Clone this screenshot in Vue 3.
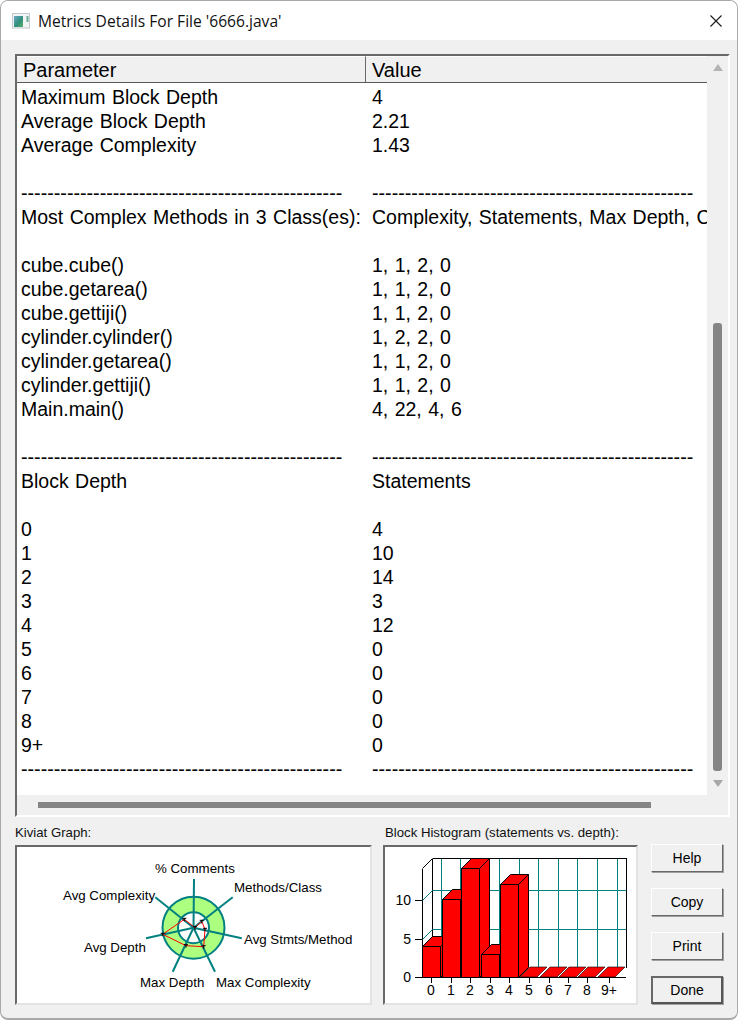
<template>
  <div class="window">
    <div class="titlebar">
      <svg class="app-icon" width="18" height="16" viewBox="0 0 18 16">
        <defs>
          <linearGradient id="iconFill" x1="0" y1="0" x2="1" y2="1">
            <stop offset="0" stop-color="#6fa8c8" />
            <stop offset="0.55" stop-color="#2f8f7c" />
            <stop offset="1" stop-color="#5fae6a" />
          </linearGradient>
        </defs>
        <rect x="0.5" y="0.5" width="17" height="14.5" fill="#f1f4f5" stroke="#c2c8cc" />
        <rect x="2" y="3" width="9" height="11" fill="url(#iconFill)" />
        <rect x="14.5" y="3" width="2" height="6" fill="#6fae96" />
      </svg>
      <span class="title">Metrics Details For File '6666.java'</span>
      <svg class="close" width="12" height="12" viewBox="0 0 12 12">
        <path d="M0.5 0.5 L11.5 11.5 M11.5 0.5 L0.5 11.5" stroke="#1a1a1a" stroke-width="1.1" fill="none" />
      </svg>
    </div>

    <div class="content">
      <div class="listbox">
        <div class="list-main">
          <div class="list-view">
            <div class="list-head">
              <div class="head-cell first">Parameter</div>
              <div class="head-cell">Value</div>
            </div>
            <div class="list-rows">
              <div v-for="(row, i) in rows" :key="i" class="row" :class="{ dashes: row[0] === dash }">
                <span class="col-a">{{ row[0] }}</span>
                <span class="col-b">{{ row[1] }}</span>
              </div>
            </div>
          </div>
          <div class="vscroll">
            <span class="arrow up"></span>
            <div class="vtrack"><div class="vthumb"></div></div>
            <span class="arrow down"></span>
          </div>
        </div>
        <div class="hscroll"><div class="hthumb"></div></div>
      </div>

      <div class="bottom">
        <div class="graph-block kiviat-block">
          <div class="graph-label">Kiviat Graph:</div>
          <div class="panel">
            <svg class="chart" viewBox="17 847 353 155" width="353" height="155">
              <circle cx="193.5" cy="927.7" r="31" fill="#adff7f" stroke="#008080" stroke-width="2" />
              <circle cx="193.5" cy="927.7" r="15.5" fill="#fff" stroke="#008080" stroke-width="2" />
              <line v-for="s in spokes" :key="s[0]" x1="193.5" y1="927.7" :x2="s[0]" :y2="s[1]" stroke="#008080" stroke-width="2" />
              <polygon :points="kiviatPoints" fill="none" stroke="#ff0000" stroke-width="1" />
              <path v-for="p in kiviat" :key="p[0]" :d="`M${p[0] - 2} ${p[1] - 1}h4M${p[0]} ${p[1] - 1}v3`" stroke="#000" stroke-width="1" fill="none" />
              <text v-for="l in kiviatLabels" :key="l.t" :x="l.x" :y="l.y" class="chart-text">{{ l.t }}</text>
            </svg>
          </div>
        </div>

        <div class="graph-block hist-block">
          <div class="graph-label">Block Histogram (statements vs. depth):</div>
          <div class="panel">
            <svg class="chart" viewBox="385 847 251 155" width="251" height="155">
              <g shape-rendering="crispEdges">
                <line v-for="x in gridX" :key="x" :x1="x" y1="858" :x2="x" y2="967" stroke="#008080" />
                <line x1="432" y1="890" x2="626" y2="890" stroke="#008080" />
                <line x1="432" y1="929" x2="626" y2="929" stroke="#008080" />
                <path d="M432.5 858.5H626.5V967.5M432.5 858.5V967.5M422.5 868.5V977.5H626" stroke="#000" fill="none" />
                <path d="M415 900.5h7M415 939.5h7M415 977.5h7" stroke="#000" fill="none" />
                <line v-for="t in ticks" :key="t.l" :x1="t.x" y1="978" :x2="t.x" y2="983" stroke="#000" />
              </g>
              <path d="M422.5 900.5L432.5 890.5M422.5 939.5L432.5 929.5" stroke="#008080" fill="none" />
              <path d="M422.5 868.5L432.5 858.5" stroke="#000" fill="none" />
              <g v-for="b in flatBars" :key="b">
                <polygon :points="`${b},977 ${b + 17},977 ${b + 27},967 ${b + 10},967`" fill="#ff0000" stroke="#000" stroke-width="0.6" />
              </g>
              <g v-for="b in bars" :key="b.x" stroke="#000" stroke-width="1" fill="#ff0000">
                <polygon :points="`${b.x + 18},${b.top} ${b.x + 28},${Math.max(b.top - 10, 858.5)} ${b.x + 28},967.5 ${b.x + 18},977.5`" />
                <polygon :points="topFace(b)" />
                <rect :x="b.x" :y="b.top" width="18" :height="977.5 - b.top" />
              </g>
              <text x="411" y="905" class="axis-text end">10</text>
              <text x="411" y="944" class="axis-text end">5</text>
              <text x="411" y="982" class="axis-text end">0</text>
              <text v-for="t in ticks" :key="t.l + 't'" :x="t.x" y="995" class="axis-text mid">{{ t.l }}</text>
            </svg>
          </div>
        </div>

        <div class="buttons">
          <button class="btn">Help</button>
          <button class="btn">Copy</button>
          <button class="btn">Print</button>
          <button class="btn default">Done</button>
        </div>
      </div>
    </div>
  </div>
</template>

<script setup>
const dash = '-'.repeat(49)

const rows = [
  ['Maximum Block Depth', '4'],
  ['Average Block Depth', '2.21'],
  ['Average Complexity', '1.43'],
  ['', ''],
  [dash, dash],
  ['Most Complex Methods in 3 Class(es):', 'Complexity, Statements, Max Depth, Calls'],
  ['', ''],
  ['cube.cube()', '1, 1, 2, 0'],
  ['cube.getarea()', '1, 1, 2, 0'],
  ['cube.gettiji()', '1, 1, 2, 0'],
  ['cylinder.cylinder()', '1, 2, 2, 0'],
  ['cylinder.getarea()', '1, 1, 2, 0'],
  ['cylinder.gettiji()', '1, 1, 2, 0'],
  ['Main.main()', '4, 22, 4, 6'],
  ['', ''],
  [dash, dash],
  ['Block Depth', 'Statements'],
  ['', ''],
  ['0', '4'],
  ['1', '10'],
  ['2', '14'],
  ['3', '3'],
  ['4', '12'],
  ['5', '0'],
  ['6', '0'],
  ['7', '0'],
  ['8', '0'],
  ['9+', '0'],
  [dash, dash]
]

const spokes = [
  [194, 879],
  [232.7, 897.3],
  [241.7, 938.3],
  [215, 971.7],
  [172.7, 971.7],
  [146, 938.3],
  [155.3, 897.3]
]

const kiviat = [
  [201.7, 921.3],
  [205, 929.3],
  [203.7, 946.7],
  [186, 945.7],
  [162.7, 934.3],
  [184.3, 919.3],
  [195, 927.7]
]
const kiviatPoints = kiviat.map(p => p.join(',')).join(' ')

const kiviatLabels = [
  { t: '% Comments', x: 155, y: 873 },
  { t: 'Methods/Class', x: 234, y: 892 },
  { t: 'Avg Complexity', x: 63, y: 900 },
  { t: 'Avg Stmts/Method', x: 244, y: 944 },
  { t: 'Avg Depth', x: 84, y: 952 },
  { t: 'Max Depth', x: 140, y: 987 },
  { t: 'Max Complexity', x: 216, y: 987 }
]

const gridX = [441.5, 460.5, 480.5, 499.5, 519.5, 538.5, 558.5, 577.5, 597.5, 617.5]

const bars = [
  { x: 422.5, top: 946.5 },
  { x: 442.5, top: 899.5 },
  { x: 461.5, top: 868.5 },
  { x: 481.5, top: 954.5 },
  { x: 500.5, top: 884.5 }
]

const flatBars = [520, 540, 559, 578, 598]

const ticks = [
  { l: '0', x: 431 },
  { l: '1', x: 451 },
  { l: '2', x: 470 },
  { l: '3', x: 490 },
  { l: '4', x: 509 },
  { l: '5', x: 529 },
  { l: '6', x: 549 },
  { l: '7', x: 568 },
  { l: '8', x: 587 },
  { l: '9+', x: 609 }
]

// top face of a bar, cut off where it would leave the back wall
function topFace(b) {
  const back = Math.max(b.top - 10, 858.5)
  const shift = b.top - back
  return `${b.x},${b.top} ${b.x + 18},${b.top} ${b.x + 18 + shift},${back} ${b.x + shift},${back}`
}
</script>

<style>
html, body { margin: 0; background: #fff; }
</style>

<style scoped>
.window {
  box-sizing: border-box;
  width: 738px;
  height: 1020px;
  background: #f0f0f0;
  border: 1px solid #a9a9a9;
  border-bottom-width: 2px;
  border-radius: 8px;
  overflow: hidden;
  font-family: "Liberation Sans", Arial, sans-serif;
  color: #000;
  display: flex;
  flex-direction: column;
}
.titlebar {
  height: 39px;
  flex: none;
  background: #fff;
  display: flex;
  align-items: center;
  padding: 0 15px 0 11px;
  gap: 8px;
}
.title {
  font-family: "Open Sans", sans-serif;
  font-size: 15.6px;
  color: #111;
  flex: 1;
}
.content {
  flex: 1;
  padding: 14px 7px 0 14px;
  display: flex;
  flex-direction: column;
}
.listbox {
  box-sizing: border-box;
  height: 763px;
  border: 2px solid;
  border-color: #696969 #fff #fff #696969;
  display: flex;
  flex-direction: column;
}
.list-main {
  flex: 1;
  display: flex;
  min-height: 0;
}
.list-view {
  width: 691px;
  background: #fff;
  overflow: hidden;
  display: flex;
  flex-direction: column;
}
.list-head {
  display: flex;
  height: 27px;
  flex: none;
  background: #f0f0f0;
  border-bottom: 1px solid #5a5a5a;
  box-sizing: border-box;
  font-size: 20px;
}
.head-cell {
  padding: 0 0 0 6px;
  line-height: 26px;
  flex: 1;
  border-top: 1px solid #fff;
}
.head-cell.first {
  flex: none;
  box-sizing: border-box;
  width: 349px;
  border-right: 1px solid #696969;
}
.list-rows {
  padding-top: 2px;
  font-size: 19.5px;
  word-spacing: 1px;
}
.row {
  display: flex;
  height: 24px;
  line-height: 24px;
  white-space: nowrap;
  padding-left: 4px;
}
.row.dashes {
  font-size: 19.7px;
}
.col-a {
  width: 351px;
  flex: none;
}
.vscroll {
  width: 21px;
  flex: none;
  display: flex;
  flex-direction: column;
  align-items: center;
}
.arrow {
  flex: none;
  width: 0;
  height: 0;
  border-left: 5px solid transparent;
  border-right: 5px solid transparent;
}
.arrow.up {
  border-bottom: 7px solid #b4b4b4;
  margin-top: 8px;
}
.arrow.down {
  border-top: 7px solid #a8a8a8;
  margin-bottom: 8px;
}
.vtrack {
  flex: 1;
  width: 9px;
  padding-top: 252px;
  padding-bottom: 9px;
  box-sizing: border-box;
  display: flex;
}
.vthumb {
  flex: 1;
  background: #858585;
  border-radius: 3px;
}
.hscroll {
  height: 20px;
  flex: none;
  padding: 7px 0 0 21px;
  box-sizing: border-box;
}
.hthumb {
  width: 613px;
  height: 6px;
  background: #858585;
}
.bottom {
  display: flex;
  margin-top: 8px;
}
.graph-label {
  font-size: 13.2px;
  height: 20px;
  line-height: 16px;
  color: #111;
}
.kiviat-block {
  width: 357px;
  margin-right: 11px;
}
.hist-block {
  width: 255px;
  margin-right: 13px;
}
.hist-block .graph-label {
  padding-left: 2px;
}
.panel {
  box-sizing: border-box;
  height: 160px;
  background: #fff;
  border: 2px solid;
  border-color: #696969 #e3e3e3 #e3e3e3 #696969;
  overflow: hidden;
}
.chart {
  display: block;
}
.chart-text, .axis-text {
  font-size: 13.3px;
  fill: #000;
  font-family: "Liberation Sans", Arial, sans-serif;
}
.axis-text { font-size: 14px; }
.end { text-anchor: end; }
.mid { text-anchor: middle; }
.buttons {
  padding-top: 19px;
  display: flex;
  flex-direction: column;
  gap: 16px;
}
.btn {
  box-sizing: border-box;
  width: 72px;
  height: 28px;
  padding: 0;
  background: #f0f0f0;
  border: 1px solid;
  border-color: #fff #696969 #696969 #fff;
  box-shadow: 1px 1px 0 #a0a0a0;
  font-family: "Liberation Sans", Arial, sans-serif;
  font-size: 14px;
  color: #000;
}
.btn.default {
  border: 2px solid;
  border-color: #696969 #555 #555 #696969;
}
</style>
